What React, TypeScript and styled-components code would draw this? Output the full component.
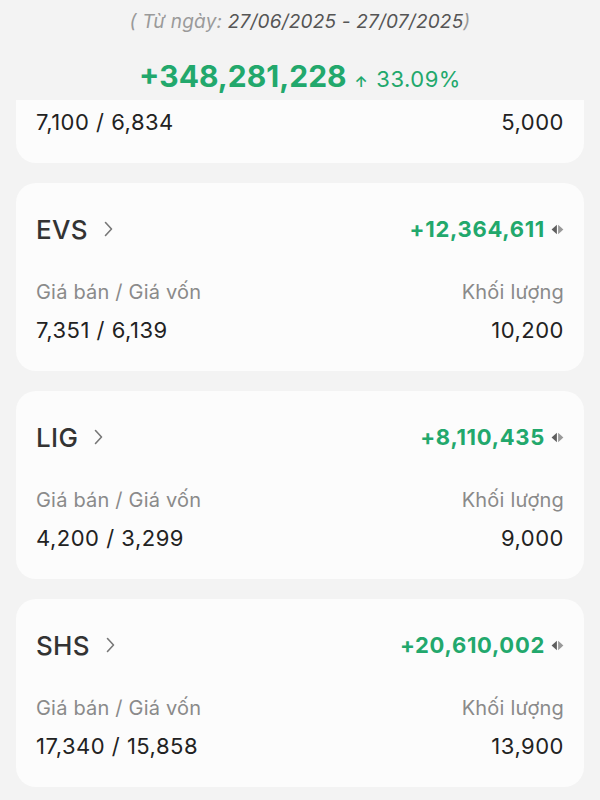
import styled, { createGlobalStyle } from "styled-components";

const GlobalStyle = createGlobalStyle`
  html, body {
    margin: 0;
    padding: 0;
    background: #f3f3f3;
  }
  * { box-sizing: border-box; }
  body {
    font-family: Inter, "Noto Sans", "Liberation Sans", sans-serif;
  }
`;

const trades = [
  { code: "EVS", profit: "+12,364,611", price: "7,351 / 6,139", volume: "10,200" },
  { code: "LIG", profit: "+8,110,435", price: "4,200 / 3,299", volume: "9,000" },
  { code: "SHS", profit: "+20,610,002", price: "17,340 / 15,858", volume: "13,900" },
];

const Page = styled.div`
  width: 600px;
  height: 800px;
  display: flex;
  flex-direction: column;
  background: #f3f3f3;
  overflow: hidden;
`;

const Header = styled.div`
  height: 100px;
  flex-shrink: 0;
  display: flex;
  flex-direction: column;
  align-items: center;
  padding-top: 10px;
`;

const Range = styled.div`
  font-size: 19px;
  line-height: 24px;
  font-style: italic;
  color: #555;
  letter-spacing: 0.2px;
  white-space: nowrap;
`;

const Muted = styled.span`
  color: #9a9a9a;
`;

const Total = styled.div`
  margin-top: 25px;
  display: flex;
  align-items: baseline;
  gap: 8px;
  color: #22a86c;
`;

const TotalValue = styled.span`
  font-size: 30px;
  line-height: 34px;
  font-weight: 700;
`;

const TotalPct = styled.span`
  display: flex;
  align-items: baseline;
  gap: 8px;
  font-size: 22px;
  font-weight: 400;
  letter-spacing: 0.5px;
`;

const Arrow = styled.span`
  font-weight: 600;
  font-size: 15px;
`;

const Viewport = styled.div`
  flex: 1;
  overflow: hidden;
  padding: 0 16px;
`;

const List = styled.div`
  display: flex;
  flex-direction: column;
  gap: 20px;
  margin-top: -125px;
`;

const Card = styled.div`
  background: #fcfcfc;
  border-radius: 20px;
  padding: 30px 20px 28px;
  display: flex;
  flex-direction: column;
`;

const TitleRow = styled.div`
  height: 32px;
  display: flex;
  align-items: center;
  justify-content: space-between;
`;

const Code = styled.div`
  display: flex;
  align-items: center;
  gap: 16px;
  font-size: 26px;
  font-weight: 500;
  color: #333;
  letter-spacing: 0.3px;
`;

const Profit = styled.div`
  display: flex;
  align-items: center;
  gap: 6px;
  font-size: 22px;
  font-weight: 700;
  letter-spacing: 0.7px;
  color: #22a86c;
`;

const InfoRow = styled.div<{ $first?: boolean }>`
  display: flex;
  justify-content: space-between;
  margin-top: ${(p) => (p.$first ? "34px" : "12px")};
  line-height: 26px;
`;

const Label = styled.span`
  font-size: 20px;
  letter-spacing: 0.2px;
  color: #8a8a8a;
`;

const Value = styled.span`
  font-size: 22px;
  letter-spacing: 0.5px;
  color: #222;
`;

function Chevron() {
  return (
    <svg width="9" height="16" viewBox="0 0 9 16">
      <path d="M1.5 1.5 L7.5 8 L1.5 14.5" fill="none" stroke="#777" strokeWidth="1.6" strokeLinecap="round" strokeLinejoin="round" />
    </svg>
  );
}

function Swap() {
  return (
    <svg width="13" height="11" viewBox="0 0 13 11">
      <path d="M5.9 0.8 L0.6 5.5 L5.9 10.2 Z" fill="#5f5f5f" />
      <path d="M7.1 0.8 L12.4 5.5 L7.1 10.2 Z" fill="#9a9a9a" />
    </svg>
  );
}

function TradeCard({ code, profit, price, volume }: (typeof trades)[number]) {
  return (
    <Card>
      <TitleRow>
        <Code>
          {code}
          <Chevron />
        </Code>
        <Profit>
          {profit}
          <Swap />
        </Profit>
      </TitleRow>
      <InfoRow $first>
        <Label>Giá bán / Giá vốn</Label>
        <Label>Khối lượng</Label>
      </InfoRow>
      <InfoRow>
        <Value>{price}</Value>
        <Value>{volume}</Value>
      </InfoRow>
    </Card>
  );
}

export default function App() {
  return (
    <Page>
      <GlobalStyle />
      <Header>
        <Range>
          <Muted>( Từ ngày: </Muted>27/06/2025 - 27/07/2025<Muted>)</Muted>
        </Range>
        <Total>
          <TotalValue>+348,281,228</TotalValue>
          <TotalPct>
            <Arrow>↑</Arrow>33.09%
          </TotalPct>
        </Total>
      </Header>
      <Viewport>
        <List>
          <TradeCard code="VIX" profit="+1,818,870" price="7,100 / 6,834" volume="5,000" />
          {trades.map((t) => (
            <TradeCard key={t.code} {...t} />
          ))}
        </List>
      </Viewport>
    </Page>
  );
}
